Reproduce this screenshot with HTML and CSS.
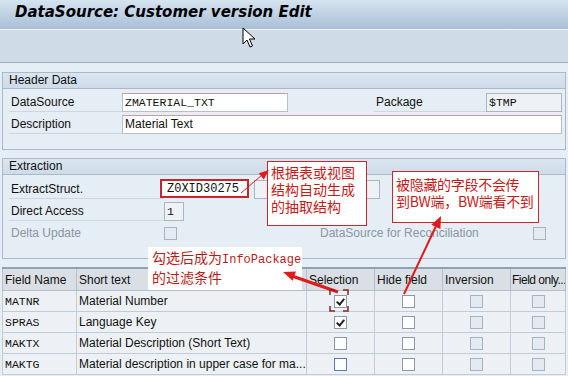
FILE: index.html
```html
<!DOCTYPE html>
<html lang="en">
<head>
  <meta charset="UTF-8">
  <title>DataSource: Customer version Edit</title>
  <link rel="stylesheet" href="styles.css">
</head>
<body>

<div class="titlebar">
  <h1>DataSource: Customer version Edit</h1>
</div>
<div class="toolbar"></div>

<div class="content">

  <section class="group">
    <div class="group-title">Header Data</div>
    <div class="group-body">
      <div class="row">
        <span class="label w113">DataSource</span>
        <span class="field mono w166">ZMATERIAL_TXT</span>
        <span class="spacer w86"></span>
        <span class="label w112">Package</span>
        <span class="field mono w76 grey">$TMP</span>
      </div>
      <div class="row">
        <span class="label w113">Description</span>
        <span class="field w440">Material Text</span>
      </div>
    </div>
  </section>

  <section class="group extract">
    <div class="group-title">Extraction</div>
    <div class="group-body">
      <div class="row">
        <span class="label w155">ExtractStruct.</span>
        <span class="field mono marked">Z0XID30275</span>
        <span class="field grey w126"></span>
      </div>
      <div class="row">
        <span class="label w155">Direct Access</span>
        <span class="field mono w20 grey">1</span>
      </div>
      <div class="row">
        <span class="label w155 off">Delta Update</span>
        <span class="cb dis"></span>
        <span class="label off recon">DataSource for Reconciliation</span>
        <span class="cb dis"></span>
      </div>
    </div>
  </section>

  <table class="fields">
    <colgroup>
      <col class="c-name"><col class="c-text"><col class="c-box"><col class="c-box"><col class="c-box"><col>
    </colgroup>
    <thead>
      <tr><th>Field Name</th><th>Short text</th><th>Selection</th><th>Hide field</th><th>Inversion</th><th class="tight">Field only...</th></tr>
    </thead>
    <tbody>
      <tr><td class="mono">MATNR</td><td>Material Number</td><td><span class="cb on"></span></td><td><span class="cb"></span></td><td><span class="cb dis"></span></td><td><span class="cb dis"></span></td></tr>
      <tr><td class="mono">SPRAS</td><td>Language Key</td><td><span class="cb on"></span></td><td><span class="cb"></span></td><td><span class="cb dis"></span></td><td><span class="cb dis"></span></td></tr>
      <tr><td class="mono">MAKTX</td><td>Material Description (Short Text)</td><td><span class="cb"></span></td><td><span class="cb"></span></td><td><span class="cb dis"></span></td><td><span class="cb dis"></span></td></tr>
      <tr><td class="mono">MAKTG</td><td>Material description in upper case for ma...</td><td><span class="cb focus"></span></td><td><span class="cb"></span></td><td><span class="cb dis"></span></td><td><span class="cb dis"></span></td></tr>
    </tbody>
  </table>
</div>

<!-- notes drawn over the screen -->
<div class="note note1">根据表或视图<br>结构自动生成<br>的抽取结构</div>
<div class="note note2">被隐藏的字段不会传<br>到BW端，BW端看不到</div>
<div class="note note3">勾选后成为<span class="mono">InfoPackage</span><br>的过滤条件</div>

<svg class="arrows" width="568" height="376" viewBox="0 0 568 376">
  <g stroke="#e01b1b" fill="#e01b1b">
    <line x1="241" y1="193" x2="262" y2="175" stroke-width="1"/>
    <polygon points="269,170 263.8,179.5 258.8,173.3" stroke="none"/>
    <line x1="404" y1="294" x2="437" y2="224" stroke-width="2"/>
    <polygon points="441,216 440.4,228.9 431.4,224.7" stroke="none"/>
    <line x1="338" y1="292" x2="292" y2="276" stroke-width="3"/>
    <polygon points="283,272 296,271.4 292.6,280.8" stroke="none"/>
  </g>
  <path d="M330,295 V290 H335 M343,290 H348 V295 M330,306 V311 H335 M343,311 H348 V306" stroke="#8b2323" stroke-width="1.5" fill="none"/>
</svg>

<svg class="cursor" width="14" height="22" viewBox="0 0 14 22">
  <path d="M1,1 V17 L5,13 L8,20 L10.5,19 L7.5,12 H13 Z" fill="#fff" stroke="#000" stroke-width="1"/>
</svg>

</body>
</html>
```
FILE: styles.css
```css
body {
  margin: 0;
  width: 568px;
  height: 376px;
  overflow: hidden;
  position: relative;
  background: #e5edf5;
  font-family: "Liberation Sans", Arial, sans-serif;
  font-size: 12px;
  color: #111;
}
.titlebar {
  height: 29px;
  border-bottom: 1px solid #eef4fa;
  background: linear-gradient(#d6e3f0, #a9bfd6);
}
.titlebar h1 {
  margin: 0;
  padding: 3px 0 0 15px;
  font-family: "DejaVu Sans", Verdana, sans-serif;
  font-size: 15px;
  font-weight: bold;
  font-style: italic;
  color: #000;
}
.toolbar {
  height: 32px;
  background: #cfdbe7;
  border-bottom: 1px solid #9cafc2;
}
.content {
  padding-top: 9px;
}
.group {
  margin: 0 2px 8px 2px;
  border: 1px solid #a9b9c9;
}
.group-title {
  height: 15px;
  line-height: 15px;
  padding-left: 6px;
  border-bottom: 1px solid #a9b9c9;
  background: linear-gradient(#dae5f0, #cedbe8);
}
.group-body {
  padding: 4px 0 15px 6px;
  display: flex;
  flex-direction: column;
  gap: 3px;
}
.extract .group-body {
  padding: 5px 0 15px 6px;
}
.row {
  display: flex;
  align-items: center;
  height: 19px;
}
.label {
  box-sizing: border-box;
  height: 19px;
  line-height: 19px;
  padding-left: 2px;
  border-bottom: 1px solid #cdd6df;
  white-space: nowrap;
}
.label.off {
  color: #8a96a2;
  border-bottom: none;
}
.label.recon {
  margin-left: 141px;
  width: 215px;
}
.field {
  box-sizing: border-box;
  height: 19px;
  line-height: 17px;
  padding-left: 2px;
  background: #fff;
  border: 1px solid #b4c0cc;
  border-top-color: #d09a9a;
  white-space: nowrap;
}
.field.grey {
  background: #eef2f6;
  border-color: #a9b5c1;
}
.mono {
  font-family: "Liberation Mono", "Courier New", monospace;
  font-size: 11.5px;
}
.field.marked {
  width: 89px;
  margin: -3px 5px 0 -4px;
  padding-left: 5px;
  font-size: 12px;
  border: 2px solid #c4262e;
}
.spacer { display: block; }
.w20 { width: 20px; }
.w76 { width: 76px; }
.w86 { width: 86px; }
.w112 { width: 112px; }
.w113 { width: 113px; }
.w126 { width: 126px; }
.w155 { width: 155px; }
.w166 { width: 166px; }
.w440 { width: 440px; }

.cb {
  display: inline-block;
  box-sizing: border-box;
  width: 13px;
  height: 13px;
  background: #fff;
  border: 1px solid #8c9aa8;
  vertical-align: middle;
  position: relative;
}
.cb.dis {
  background: #e3eaf1;
  border-color: #a6b3c0;
}
.cb.focus {
  border-color: #5a7fb0;
}
.cb.on::after {
  content: "";
  position: absolute;
  left: 3px;
  top: 1px;
  width: 3px;
  height: 6px;
  border: solid #222;
  border-width: 0 2px 2px 0;
  transform: rotate(40deg);
}

.fields {
  margin-left: 2px;
  width: 564px;
  table-layout: fixed;
  border-collapse: collapse;
  border-top: 2px solid #8ea2b6;
}
.c-name { width: 74px; }
.c-text { width: 230px; }
.c-box { width: 68px; }
.fields th {
  height: 21px;
  padding: 0 2px;
  text-align: left;
  font-weight: normal;
  background: #dadfe5;
  border: 1px solid #b3bec9;
  white-space: nowrap;
  overflow: hidden;
}
.fields th.tight {
  padding: 0 1px;
  letter-spacing: -0.5px;
}
.fields td {
  height: 20px;
  padding: 0 2px;
  background: #edf1f5;
  border: 1px solid #c3ccd5;
  white-space: nowrap;
  overflow: hidden;
}
.fields td:nth-child(n+3) {
  text-align: center;
}

.note {
  position: absolute;
  background: #fff;
  color: #c41a1a;
  font-family: "Noto Sans CJK SC", sans-serif;
  font-size: 14px;
  line-height: 17px;
}
.note1 {
  left: 267px;
  top: 161px;
  width: 95px;
  height: 61px;
  padding: 2px 0 0 3px;
  border: 1px solid #c8282d;
}
.note2 {
  left: 392px;
  top: 171px;
  width: 142px;
  height: 46px;
  padding: 4px 0 0 3px;
  border: 1px solid #c8282d;
  letter-spacing: -0.3px;
}
.note3 {
  left: 148px;
  top: 247px;
  width: 150px;
  height: 41px;
  padding: 2px 0 0 4px;
  color: #b51c1c;
}
.note3 .mono {
  font-size: 12px;
}
.arrows {
  position: absolute;
  left: 0;
  top: 0;
  pointer-events: none;
}
.cursor {
  position: absolute;
  left: 242px;
  top: 27px;
}
```
